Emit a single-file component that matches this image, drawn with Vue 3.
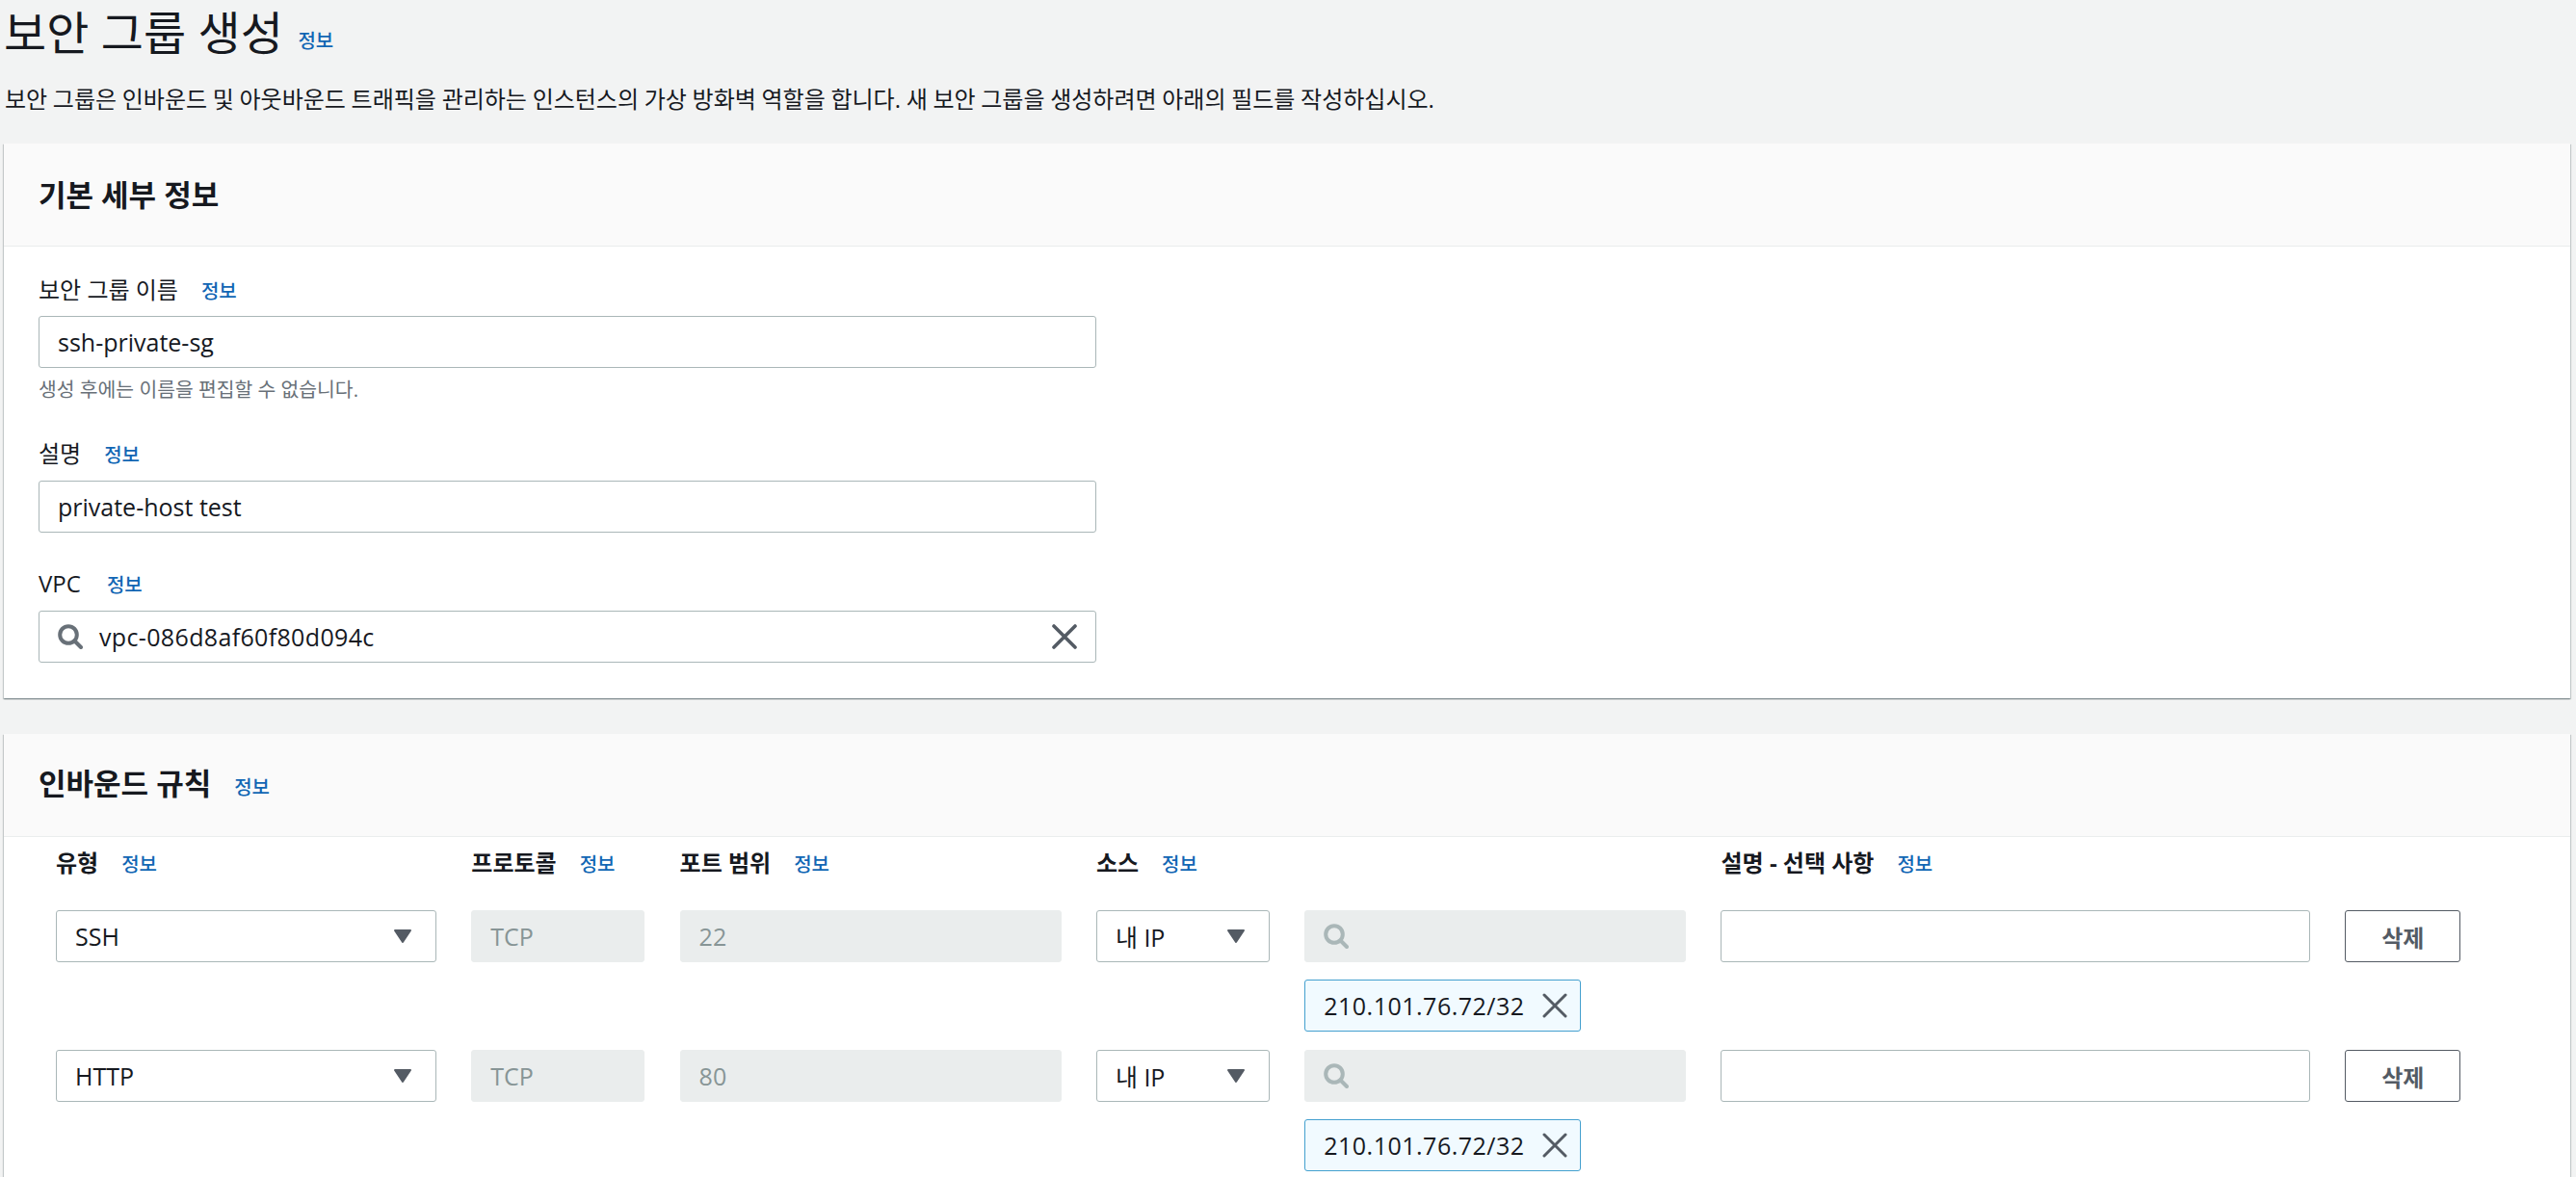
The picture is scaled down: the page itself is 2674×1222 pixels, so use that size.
<script setup>
const rows = [
  { type: 'SSH', port: '22', cidr: '210.101.76.72/32' },
  { type: 'HTTP', port: '80', cidr: '210.101.76.72/32' },
]
const heads = [
  { t: '유형', cls: 'c1' },
  { t: '프로토콜', cls: 'c2' },
  { t: '포트 범위', cls: 'c3' },
  { t: '소스', cls: 'c4' },
  { t: '설명 - 선택 사항', cls: 'c6' },
]
</script>

<template>
  <div class="page">
    <header class="top">
      <h1>보안 그룹 생성 <a class="info">정보</a></h1>
      <p>보안 그룹은 인바운드 및 아웃바운드 트래픽을 관리하는 인스턴스의 가상 방화벽 역할을 합니다. 새 보안 그룹을 생성하려면 아래의 필드를 작성하십시오.</p>
    </header>

    <section class="card first">
      <div class="card-head"><h2>기본 세부 정보</h2></div>
      <div class="form">
        <div class="field f1">
          <label>보안 그룹 이름<a class="info">정보</a></label>
          <div class="box">ssh-private-sg</div>
          <small>생성 후에는 이름을 편집할 수 없습니다.</small>
        </div>
        <div class="field f2">
          <label>설명<a class="info">정보</a></label>
          <div class="box">private-host test</div>
        </div>
        <div class="field f3">
          <label>VPC<a class="info">정보</a></label>
          <div class="box search">
            <svg class="ic-search" viewBox="0 0 26 26"><circle cx="11" cy="11" r="8.8" /><path d="M17.5 17.5l6.5 6.5" /></svg>
            <span class="vpc">vpc-086d8af60f80d094c</span>
            <svg class="ic-x big" viewBox="0 0 26 26"><path d="M2 2l22 22M24 2L2 24" /></svg>
          </div>
        </div>
      </div>
    </section>

    <section class="card second">
      <div class="card-head">
        <h2>인바운드 규칙<a class="info">정보</a></h2>
      </div>
      <div class="rules">
        <div class="grid heads">
          <div v-for="h in heads" :key="h.t" :class="['th', h.cls]">{{ h.t }}<a class="info">정보</a></div>
        </div>
        <div v-for="r in rows" :key="r.type" class="grid rule">
          <div class="box sel">{{ r.type }}<svg class="caret" viewBox="0 0 20 16"><path d="M2 2h16l-8 12z" /></svg></div>
          <div class="box off">TCP</div>
          <div class="box off">{{ r.port }}</div>
          <div class="box sel">내 IP<svg class="caret" viewBox="0 0 20 16"><path d="M2 2h16l-8 12z" /></svg></div>
          <div class="box off">
            <svg class="ic-search dim" viewBox="0 0 26 26"><circle cx="11" cy="11" r="8.8" /><path d="M17.5 17.5l6.5 6.5" /></svg>
          </div>
          <div class="box"></div>
          <button class="del">삭제</button>
          <div class="chip">
            <span>{{ r.cidr }}</span>
            <svg class="ic-x" viewBox="0 0 26 26"><path d="M2 2l22 22M24 2L2 24" /></svg>
          </div>
        </div>
      </div>
    </section>
  </div>
</template>

<style>
html, body { margin: 0; background: #f2f3f3; overflow: hidden; }
</style>

<style scoped>
.page {
  width: 2674px;
  height: 1222px;
  overflow: hidden;
  background: #f2f3f3;
  color: #16191f;
  font-family: "Open Sans", "Noto Sans CJK KR", sans-serif;
  font-size: 24px;
  box-sizing: border-box;
}
.top { padding: 4px 0 0 4px; height: 149px; box-sizing: border-box; }
h1 {
  margin: 0;
  font-size: 48px;
  line-height: 60px;
  font-weight: 400;
}
h1 .info { margin-left: 3px; vertical-align: 2px; }
.top p { margin: 13px 0 0 1px; font-size: 24px; line-height: 34px; word-spacing: -0.55px; }
.info {
  color: #1166b4;
  font-size: 20px;
  font-weight: 500;
  margin-left: 24px;
}
.card {
  margin-left: 4px;
  width: 2664px;
  background: #fff;
  box-shadow: 0 1px 1px 0 rgba(0, 28, 36, .3), 1px 1px 1px 0 rgba(0, 28, 36, .15), -1px 1px 1px 0 rgba(0, 28, 36, .15);
}
.card-head {
  height: 107px;
  box-sizing: border-box;
  background: #fafafa;
  border-bottom: 1px solid #eaeded;
  padding: 0 36px;
  display: flex;
  align-items: center;
}
h2 { margin: 0; font-size: 31px; line-height: 40px; font-weight: 700; }
.form { padding: 26px 36px 37px; }
.field { width: 1098px; }
.f2 { margin-top: 34px; }
.f3 { margin-top: 34px; }
label { display: block; line-height: 38px; height: 46px; }
.f3 label, .f2 label { height: 47px; }
.f3 .info { margin-left: 27px; }
.box {
  height: 54px;
  box-sizing: border-box;
  background: #fff;
  border: 1px solid #aab7b8;
  border-radius: 3px;
  padding: 0 19px;
  display: flex;
  align-items: center;
  white-space: nowrap;
  font-size: 25px;
}
small {
  display: block;
  margin-top: 8px;
  font-size: 20.4px;
  line-height: 28px;
  color: #687078;
}
.search { gap: 17px; }
.search span { flex: 1; }
.vpc { letter-spacing: .35px; }
.ic-search { width: 26px; height: 26px; flex: none; fill: none; stroke: #687078; stroke-width: 4; stroke-linecap: round; }
.ic-search.dim { stroke: #aab7b8; }
.ic-x { width: 26px; height: 26px; flex: none; fill: none; stroke: #545b64; stroke-width: 3; stroke-linecap: round; }
.ic-x.big { stroke-width: 3.6; }
.second { margin-top: 37px; height: 470px; }
.rules { padding: 0 0 0 54px; }
.grid {
  display: grid;
  grid-template-columns: 395px 180px 396px 180px 396px 611.5px 120px;
  column-gap: 36.3px;
}
.heads { height: 76px; align-items: start; }
.th { font-weight: 700; white-space: nowrap; line-height: 54px; }
.c1 { grid-column: 1; }
.c2 { grid-column: 2; }
.c3 { grid-column: 3; }
.c4 { grid-column: 4 / span 2; }
.c6 { grid-column: 6; }
.rule { grid-template-rows: 54px 54px; row-gap: 18px; height: 145px; }
.sel { justify-content: space-between; }
.caret { width: 20px; height: 16px; margin-right: 5px; fill: #545b64; stroke: #545b64; stroke-width: 2; stroke-linejoin: round; }
.off { background: #eaeded; border-color: #eaeded; color: #879596; }
.del {
  height: 54px;
  font: inherit;
  color: #545b64;
  background: #fff;
  border: 1px solid #545b64;
  border-radius: 3px;
  font-weight: 700;
}
.chip {
  grid-column: 5;
  grid-row: 2;
  justify-self: start;
  width: 287px;
  height: 54px;
  box-sizing: border-box;
  background: #f1faff;
  border: 1px solid #44a0cf;
  border-radius: 3px;
  display: flex;
  align-items: center;
  justify-content: space-between;
  padding: 0 13px 0 19px;
  white-space: nowrap;
  font-size: 25px;
  letter-spacing: .5px;
}
</style>
